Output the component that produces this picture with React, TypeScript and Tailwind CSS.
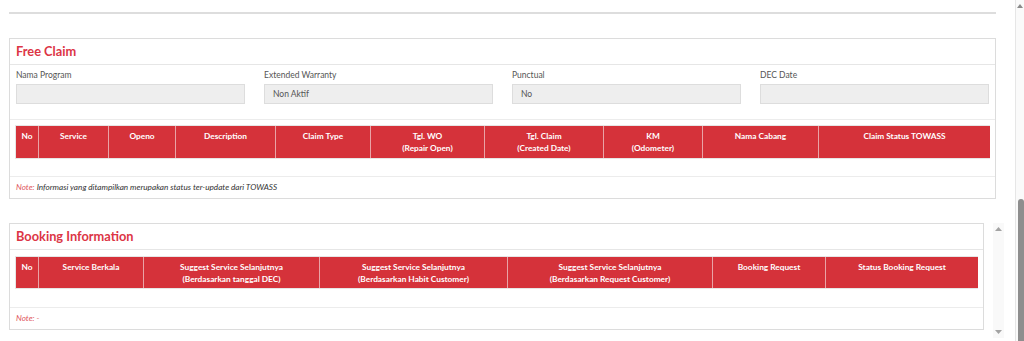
const claimCols = [
  { w: "w-[22px]", t: ["No"] },
  { w: "w-[70px]", t: ["Service"] },
  { w: "w-[67px]", t: ["Openo"] },
  { w: "w-[100px]", t: ["Description"] },
  { w: "w-[95px]", t: ["Claim Type"] },
  { w: "w-[114px]", t: ["Tgl. WO", "(Repair Open)"] },
  { w: "w-[119px]", t: ["Tgl. Claim", "(Created Date)"] },
  { w: "w-[99px]", t: ["KM", "(Odometer)"] },
  { w: "w-[116px]", t: ["Nama Cabang"] },
  { w: "w-[172px]", t: ["Claim Status TOWASS"] },
];

const bookingCols = [
  { w: "w-[22px]", t: ["No"] },
  { w: "w-[105px]", t: ["Service Berkala"] },
  { w: "w-[176px]", t: ["Suggest Service Selanjutnya", "(Berdasarkan tanggal DEC)"] },
  { w: "w-[188px]", t: ["Suggest Service Selanjutnya", "(Berdasarkan Habit Customer)"] },
  { w: "w-[205px]", t: ["Suggest Service Selanjutnya", "(Berdasarkan Request Customer)"] },
  { w: "w-[113px]", t: ["Booking Request"] },
  { w: "w-[153px]", t: ["Status Booking Request"] },
];

const fields = [
  { label: "Nama Program", value: "" },
  { label: "Extended Warranty", value: "Non Aktif" },
  { label: "Punctual", value: "No" },
  { label: "DEC Date", value: "" },
];

function HeaderRow({ cols, h }: { cols: { w: string; t: string[] }[]; h: string }) {
  return (
    <div className={`flex ${h} border border-[#e6e6e6]`}>
      {cols.map((c, i) => (
        <div
          key={i}
          className={`${c.w} shrink-0 bg-[#d5323a] border-l border-[#e9a3a6] first:border-l-0 pt-[4px] text-center text-white font-bold text-[8.3px] leading-[12px]`}
        >
          {c.t.map((line, j) => (
            <div key={j}>{line}</div>
          ))}
        </div>
      ))}
    </div>
  );
}

export default function App() {
  return (
    <div className="w-[1024px] h-[341px] overflow-hidden bg-white flex font-['Lato',sans-serif]">
      <div className="w-[1015px] shrink-0 pl-[9px] pt-[12px]">
        <div className="w-[987px] h-[2px] bg-[#dddddd]" />

        {/* Free Claim */}
        <div className="mt-[24px] w-[987px] border border-[#dcdcdc]">
          <div className="h-[26px] border-b border-[#e6e6e6] pl-[6px] flex items-center">
            <span className="text-[#dc3545] font-bold text-[12.8px]">Free Claim</span>
          </div>
          <div className="grid grid-cols-4 gap-[19px] px-[6px] pt-[4px] pb-[15px] border-b border-[#ececec]">
            {fields.map((f) => (
              <div key={f.label}>
                <div className="text-[8.5px] leading-[12px] text-[#555555] mb-[3px]">{f.label}</div>
                <div className="h-[20px] bg-[#eeeeee] border border-[#dddddd] px-[8px] flex items-center text-[8.5px] text-[#555555]">
                  {f.value}
                </div>
              </div>
            ))}
          </div>
          <div className="px-[5px] pt-[5px] pb-[17px] border-b border-[#ececec]">
            <HeaderRow cols={claimCols} h="h-[34px]" />
          </div>
          <div className="h-[21px] pl-[6px] flex items-center italic text-[8.2px]">
            <span className="text-[#e0565d]">Note:</span>
            <span className="text-[#333333] ml-[2px]">
              Informasi yang ditampilkan merupakan status ter-update dari TOWASS
            </span>
          </div>
        </div>

        {/* Booking Information */}
        <div className="mt-[24px] flex items-start">
          <div className="w-[975px] border border-[#dcdcdc]">
            <div className="h-[26px] border-b border-[#e6e6e6] pl-[6px] pt-[1px] flex items-center">
              <span className="text-[#dc3545] font-bold text-[12.8px]">Booking Information</span>
            </div>
            <div className="px-[5px] pt-[6px] pb-[18px] border-b border-[#ececec]">
              <HeaderRow cols={bookingCols} h="h-[33px]" />
            </div>
            <div className="h-[21px] pl-[6px] flex items-center italic text-[8.2px]">
              <span className="text-[#e0565d]">Note: -</span>
            </div>
          </div>
          <div className="ml-[9px] w-[11px] h-[115px] bg-[#f9f9f9] flex flex-col items-center justify-between py-[4px]">
            <svg width="7" height="4" viewBox="0 0 7 4">
              <path d="M0 4 L3.5 0 L7 4 Z" fill="#a3a3a3" />
            </svg>
            <svg width="7" height="4" viewBox="0 0 7 4">
              <path d="M0 0 L3.5 4 L7 0 Z" fill="#a3a3a3" />
            </svg>
          </div>
        </div>
      </div>

      {/* page scrollbar */}
      <div className="w-[9px] shrink-0 h-full border-l border-[#e6e6e6] bg-[#fafafa] flex flex-col items-center">
        <svg className="mt-[4px]" width="6" height="4" viewBox="0 0 6 4">
          <path d="M0 4 L3 0 L6 4 Z" fill="#8a8a8a" />
        </svg>
        <div className="mt-auto w-[6px] ml-[2px] h-[142px] rounded-t-[4px] bg-[#8e8e8e]" />
      </div>
    </div>
  );
}
